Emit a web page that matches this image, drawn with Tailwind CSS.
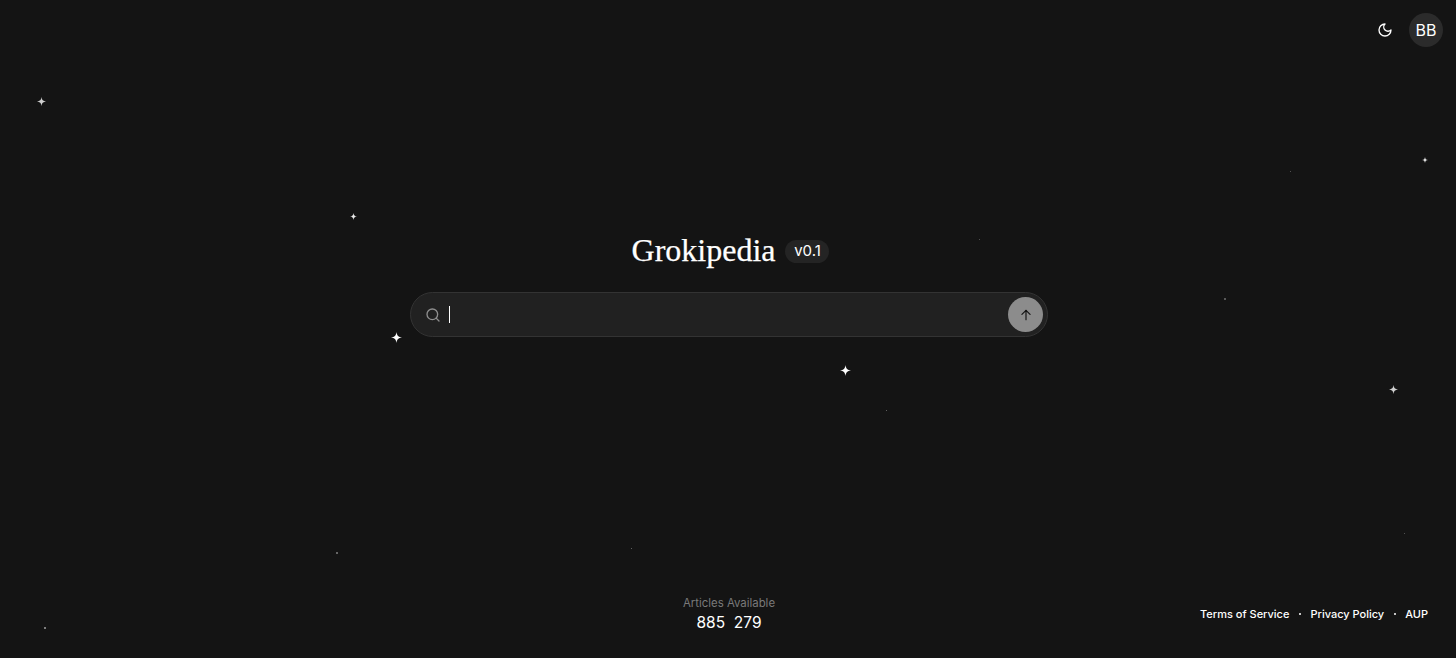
<!DOCTYPE html>
<html lang="en">
<head>
  <meta charset="UTF-8" />
  <meta name="viewport" content="width=device-width, initial-scale=1" />
  <title>Grokipedia</title>
  <script src="https://cdn.jsdelivr.net/npm/@tailwindcss/browser@4"></script>
</head>
<body class="bg-[#141414] text-white font-['Inter',sans-serif] overflow-hidden">
  <div class="relative h-[658px] flex flex-col">

    <!-- stars -->
    <svg class="absolute left-[37px] top-[97px] w-[9px] h-[9px] text-[#d0d0d0]" viewBox="0 0 24 24" fill="currentColor"><path d="M12 0C13 8 16 11 24 12C16 13 13 16 12 24C11 16 8 13 0 12C8 11 11 8 12 0Z"/></svg>
    <svg class="absolute left-[350px] top-[213px] w-[7px] h-[7px] text-[#e8e8e8]" viewBox="0 0 24 24" fill="currentColor"><path d="M12 0C13 8 16 11 24 12C16 13 13 16 12 24C11 16 8 13 0 12C8 11 11 8 12 0Z"/></svg>
    <svg class="absolute left-[391px] top-[332px] w-[11px] h-[11px] text-white" viewBox="0 0 24 24" fill="currentColor"><path d="M12 0C13 8 16 11 24 12C16 13 13 16 12 24C11 16 8 13 0 12C8 11 11 8 12 0Z"/></svg>
    <svg class="absolute left-[840px] top-[365px] w-[11px] h-[11px] text-white" viewBox="0 0 24 24" fill="currentColor"><path d="M12 0C13 8 16 11 24 12C16 13 13 16 12 24C11 16 8 13 0 12C8 11 11 8 12 0Z"/></svg>
    <svg class="absolute left-[1389px] top-[385px] w-[9px] h-[9px] text-[#d0d0d0]" viewBox="0 0 24 24" fill="currentColor"><path d="M12 0C13 8 16 11 24 12C16 13 13 16 12 24C11 16 8 13 0 12C8 11 11 8 12 0Z"/></svg>
    <svg class="absolute left-[1422px] top-[157px] w-[6px] h-[6px] text-[#e8e8e8]" viewBox="0 0 24 24" fill="currentColor"><path d="M12 0C13 8 16 11 24 12C16 13 13 16 12 24C11 16 8 13 0 12C8 11 11 8 12 0Z"/></svg>
    <span class="absolute left-[44px] top-[627px] w-[2px] h-[2px] rounded-full bg-[#a0a0a0]"></span>
    <span class="absolute left-[336px] top-[552px] w-[2px] h-[2px] rounded-full bg-[#808080]"></span>
    <span class="absolute left-[1224px] top-[298px] w-[2px] h-[2px] rounded-full bg-[#707070]"></span>
    <span class="absolute left-[631px] top-[548px] w-px h-px bg-[#606060]"></span>
    <span class="absolute left-[886px] top-[410px] w-px h-px bg-[#606060]"></span>
    <span class="absolute left-[979px] top-[239px] w-px h-px bg-[#505050]"></span>
    <span class="absolute left-[1290px] top-[171px] w-px h-px bg-[#505050]"></span>
    <span class="absolute left-[1404px] top-[533px] w-px h-px bg-[#505050]"></span>

    <!-- top bar -->
    <header class="flex justify-end items-center gap-[7px] pt-[13px] pr-[13px] h-[47px]">
      <button class="w-[34px] h-[34px] flex items-center justify-center text-white">
        <svg class="w-[16px] h-[16px]" viewBox="0 0 24 24" fill="none" stroke="currentColor" stroke-width="2" stroke-linecap="round" stroke-linejoin="round"><path d="M12 3a6 6 0 0 0 9 9 9 9 0 1 1-9-9Z"/></svg>
      </button>
      <div class="w-[34px] h-[34px] rounded-full bg-[#2b2b2b] flex items-center justify-center text-[16px]">BB</div>
    </header>

    <!-- title + search -->
    <main class="flex flex-col items-center pt-[185px]">
      <div class="flex items-center gap-[10px] h-[36px] ml-[5px]">
        <h1 class="font-['Liberation_Serif',serif] text-[32px] leading-[36px] [-webkit-text-stroke:0.25px_white]">Grokipedia</h1>
        <span class="mt-[2px] h-[23px] w-[44px] flex items-center justify-center rounded-full bg-[#242424] text-[15px] text-white">v0.1</span>
      </div>
      <div class="mt-[24px] ml-[2px] w-[638px] h-[45px] rounded-full bg-[#212121] border border-[#333333] flex items-center pl-[14px] pr-[4px]">
        <svg class="w-[16px] h-[16px] text-[#8f8f8f]" viewBox="0 0 24 24" fill="none" stroke="currentColor" stroke-width="2" stroke-linecap="round" stroke-linejoin="round"><circle cx="11" cy="11" r="8"/><path d="m21 21-4.3-4.3"/></svg>
        <span class="ml-[8px] w-px h-[17px] bg-white"></span>
        <button class="ml-auto w-[35px] h-[35px] rounded-full bg-[#8c8c8c] flex items-center justify-center text-[#141414]">
          <svg class="w-[14px] h-[14px]" viewBox="0 0 24 24" fill="none" stroke="currentColor" stroke-width="2" stroke-linecap="round" stroke-linejoin="round"><path d="M12 20V4"/><path d="m5 11 7-7 7 7"/></svg>
        </button>
      </div>
    </main>

    <!-- footer -->
    <footer class="mt-auto grid grid-cols-[1fr_auto_1fr] items-center pb-[25px] px-[28px]">
      <div></div>
      <div class="flex flex-col items-center ml-[2px]">
        <span class="text-[11.4px] leading-[14px] text-[#7a7a7a]">Articles Available</span>
        <span class="mt-[3px] text-[15.5px] leading-[20px] text-white whitespace-pre">885  279</span>
      </div>
      <nav class="flex justify-end items-center gap-[9.5px] mb-[1px] text-[11px] text-white font-medium">
        <a href="#">Terms of Service</a>
        <span class="w-[2px] h-[2px] rounded-full bg-white"></span>
        <a href="#">Privacy Policy</a>
        <span class="w-[2px] h-[2px] rounded-full bg-white"></span>
        <a href="#">AUP</a>
      </nav>
    </footer>
  </div>
</body>
</html>
